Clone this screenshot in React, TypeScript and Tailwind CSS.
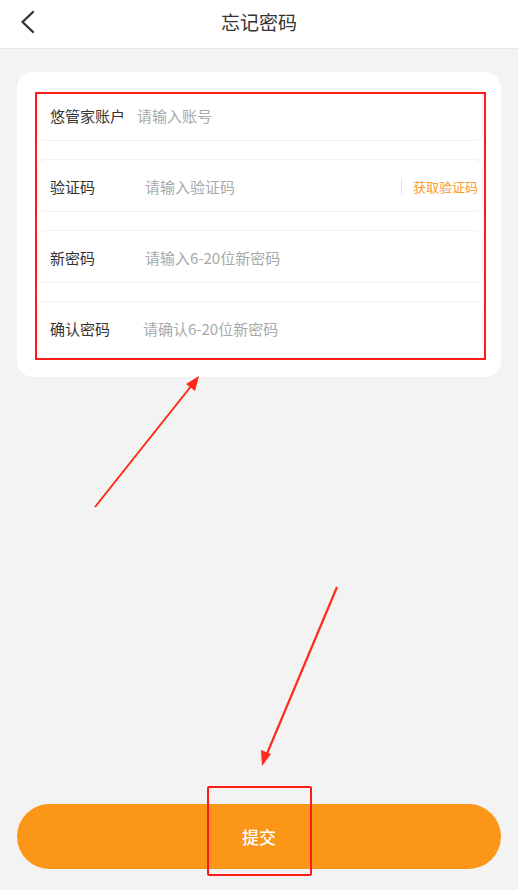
import React from 'react';

const font = { fontFamily: '"Noto Sans CJK SC", "Noto Sans", sans-serif' };

const rows = [
  { label: '悠管家账户', placeholder: '请输入账号', pl: 'pl-[12px]' },
  { label: '验证码', placeholder: '请输入验证码', pl: 'pl-[50px]', code: true },
  { label: '新密码', placeholder: '请输入6-20位新密码', pl: 'pl-[50px]' },
  { label: '确认密码', placeholder: '请确认6-20位新密码', pl: 'pl-[33px]' },
];

const App: React.FC = () => {
  return (
    <div className="relative min-h-screen h-[890px] bg-[#f3f3f3] flex flex-col" style={font}>
      {/* Header */}
      <div className="h-[49px] bg-white border-b border-[#e6e6e6] flex items-center relative shrink-0">
        <button className="absolute left-[18px] top-[9px] w-[18px] h-[26px] flex items-center justify-center">
          <svg width="16" height="24" viewBox="0 0 16 24" fill="none">
            <path d="M14 2 L3.5 12 L14 22" stroke="#333" strokeWidth="2.4" strokeLinecap="round" strokeLinejoin="round" />
          </svg>
        </button>
        <h1 className="w-full text-center text-[19px] text-[#333] leading-none -mt-[5px]">忘记密码</h1>
      </div>

      {/* Form card */}
      <div className="mx-[17px] mt-[23px] bg-white rounded-[16px] pl-[20px] pr-[18px] pt-[16px] pb-[23px] flex flex-col gap-[18px]">
        {rows.map((row, i) => (
          <div
            key={i}
            className="h-[53px] border border-[#f1f1f3] rounded-[8px] flex items-center pl-[12px] pr-[4px] pt-[3px]"
          >
            <span className="text-[15px] text-[#333] shrink-0">{row.label}</span>
            <span className={`text-[15px] text-[#a9a9a9] flex-1 ${row.pl}`}>{row.placeholder}</span>
            {row.code && (
              <div className="flex items-center">
                <div className="w-[1px] h-[16px] bg-[#e3e3e3] mr-[11px]" />
                <span className="text-[13px] text-[#fb9a30]">获取验证码</span>
              </div>
            )}
          </div>
        ))}
      </div>

      {/* Submit */}
      <div className="mt-auto mb-[21px] mx-[17px]">
        <button className="w-full h-[65px] rounded-full bg-[#fb9619] text-white text-[17px] font-medium">
          提交
        </button>
      </div>

      {/* Annotations */}
      <div className="absolute left-[35px] top-[92px] w-[451px] h-[268px] border-2 border-[#ff1a1a] pointer-events-none" />
      <div className="absolute left-[207px] top-[786px] w-[105px] h-[90px] border-2 border-[#ff1a1a] rounded-[2px] pointer-events-none" />
      <svg className="absolute left-0 top-0 pointer-events-none" width="518" height="890" viewBox="0 0 518 890">
        <line x1="95" y1="507" x2="192" y2="385" stroke="#ff2a1a" strokeWidth="2" />
        <polygon points="199,376 186,384 195,391" fill="#ff2a1a" />
        <line x1="337" y1="587" x2="266" y2="756" stroke="#ff2a1a" strokeWidth="2.2" />
        <polygon points="262,766 261,750 271,754" fill="#ff2a1a" />
      </svg>
    </div>
  );
};

export default App;
